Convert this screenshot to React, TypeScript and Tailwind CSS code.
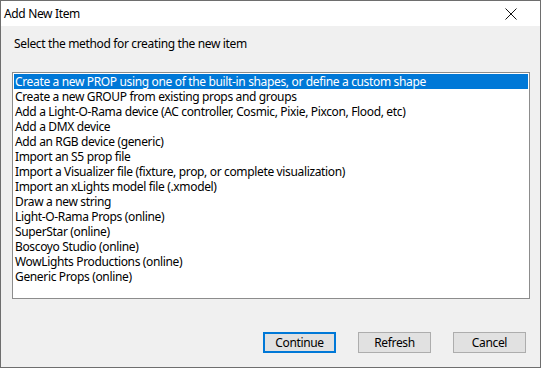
import { useState } from 'react';

const items = [
  'Create a new PROP using one of the built-in shapes, or define a custom shape',
  'Create a new GROUP from existing props and groups',
  'Add a Light-O-Rama device (AC controller, Cosmic, Pixie, Pixcon, Flood, etc)',
  'Add a DMX device',
  'Add an RGB device (generic)',
  'Import an S5 prop file',
  'Import a Visualizer file (fixture, prop, or complete visualization)',
  'Import an xLights model file (.xmodel)',
  'Draw a new string',
  'Light-O-Rama Props (online)',
  'SuperStar (online)',
  'Boscoyo Studio (online)',
  'WowLights Productions (online)',
  'Generic Props (online)',
];

function CloseIcon() {
  return (
    <svg width="12" height="12" viewBox="0 0 12 12" className="block">
      <path d="M0.5 0.5 L11.5 11.5 M11.5 0.5 L0.5 11.5" stroke="#111" strokeWidth="1" fill="none" />
    </svg>
  );
}

export default function App() {
  const [selected, setSelected] = useState(0);

  return (
    <div
      className="w-[541px] h-[368px] flex flex-col border border-[#6e6e6e] bg-[#f0f0f0] text-[12px] tracking-[-0.35px] text-black overflow-hidden"
      style={{ fontFamily: '"Noto Sans", "Liberation Sans", sans-serif' }}
    >
      {/* title bar */}
      <div className="h-[25px] bg-white flex items-center justify-between pl-[3px] pr-[23px] shrink-0">
        <span className="text-[12px] leading-none">Add New Item</span>
        <CloseIcon />
      </div>

      <div className="flex-1 flex flex-col pl-[11px] pr-[10px]">
        <div className="pt-[10px] pl-[2px] h-[46px] leading-[16px]">Select the method for creating the new item</div>

        <div className="h-[227px] bg-white border border-[#8c8c8c] p-px">
          {items.map((item, i) => (
            <div
              key={item}
              onClick={() => setSelected(i)}
              className={
                'h-[15px] leading-[15px] pl-[1px] whitespace-nowrap cursor-default ' +
                (i === selected ? 'bg-[#0078d7] text-white' : 'text-black')
              }
            >
              {item}
            </div>
          ))}
        </div>

        <div className="flex justify-end gap-[22px] mt-[33px] pr-[4px]">
          <button className="w-[73px] h-[21px] bg-[#e1e1e1] border-2 border-[#0078d7] leading-none">Continue</button>
          <button className="w-[73px] h-[21px] bg-[#e1e1e1] border border-[#adadad] leading-none">Refresh</button>
          <button className="w-[73px] h-[21px] bg-[#e1e1e1] border border-[#adadad] leading-none">Cancel</button>
        </div>
      </div>
    </div>
  );
}
